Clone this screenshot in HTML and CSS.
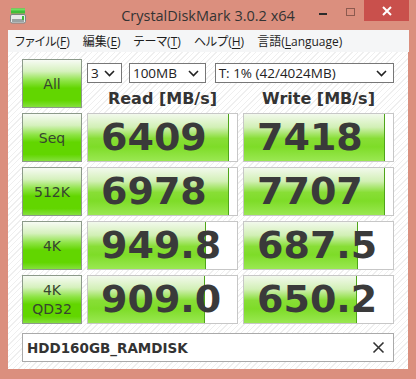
FILE: index.html
```html
<!DOCTYPE html>
<html lang="ja">
<head>
    <meta charset="UTF-8">
    <title>CrystalDiskMark 3.0.2 x64</title>
    <link rel="stylesheet" href="styles.css">
</head>
<body>
    <div class="window">
        <div class="titlebar">
            <div class="app-icon">
                <svg width="16" height="16" viewBox="0 0 16 16">
                    <rect x="1" y="0.5" width="14" height="5" fill="#3fbf3a"/>
                    <rect x="1" y="0.5" width="14" height="2" fill="#6fe060"/>
                    <rect x="0.5" y="6.5" width="15" height="8.5" rx="1.5" fill="#e8eaea" stroke="#7d8584"/>
                    <rect x="2" y="11" width="12" height="3" fill="#9aa2a2"/>
                    <rect x="12" y="8" width="2" height="4" fill="#3cb83a"/>
                </svg>
            </div>
            <div class="title">CrystalDiskMark 3.0.2 x64</div>
            <div class="controls">
                <span class="btn-min"></span>
                <span class="btn-max"></span>
                <span class="btn-close">
                    <svg width="10" height="10" viewBox="0 0 10 10">
                        <path d="M1 1L9 9M9 1L1 9" stroke="#fff" stroke-width="2"/>
                    </svg>
                </span>
            </div>
        </div>

        <ul class="menubar">
            <li>ファイル(<u>F</u>)</li>
            <li>編集(<u>E</u>)</li>
            <li>テーマ(<u>T</u>)</li>
            <li>ヘルプ(<u>H</u>)</li>
            <li>言語(<u>L</u>anguage)</li>
        </ul>

        <div class="client">
            <div class="board">
                <div class="test-btn">All</div>
                <div class="top-cell">
                    <div class="selects">
                        <div class="select sel-count">3 <svg class="chev" width="11" height="7" viewBox="0 0 11 7"><path d="M1 1L5.5 5.5L10 1" fill="none" stroke="#222" stroke-width="1.6"/></svg></div>
                        <div class="select sel-size">100MB <svg class="chev" width="11" height="7" viewBox="0 0 11 7"><path d="M1 1L5.5 5.5L10 1" fill="none" stroke="#222" stroke-width="1.6"/></svg></div>
                        <div class="select sel-drive">T: 1% (42/4024MB) <svg class="chev" width="11" height="7" viewBox="0 0 11 7"><path d="M1 1L5.5 5.5L10 1" fill="none" stroke="#222" stroke-width="1.6"/></svg></div>
                    </div>
                    <div class="heads">
                        <div>Read [MB/s]</div>
                        <div>Write [MB/s]</div>
                    </div>
                </div>

                <div class="test-btn">Seq</div>
                <div class="result"><div class="fill" style="width: 141px"></div><div class="value">6409</div></div>
                <div class="result"><div class="fill" style="width: 141px"></div><div class="value">7418</div></div>

                <div class="test-btn">512K</div>
                <div class="result"><div class="fill" style="width: 141px"></div><div class="value">6978</div></div>
                <div class="result"><div class="fill" style="width: 141px"></div><div class="value">7707</div></div>

                <div class="test-btn">4K</div>
                <div class="result"><div class="fill" style="width: 118px"></div><div class="value">949.8</div></div>
                <div class="result"><div class="fill" style="width: 114px"></div><div class="value">687.5</div></div>

                <div class="test-btn two-line">4K<br>QD32</div>
                <div class="result"><div class="fill" style="width: 117px"></div><div class="value">909.0</div></div>
                <div class="result"><div class="fill" style="width: 113px"></div><div class="value">650.2</div></div>
            </div>

            <div class="comment">
                <span>HDD160GB_RAMDISK</span>
                <svg width="13" height="13" viewBox="0 0 13 13">
                    <path d="M1.5 1.5L11.5 11.5M11.5 1.5L1.5 11.5" stroke="#333" stroke-width="1.6"/>
                </svg>
            </div>
        </div>
    </div>
</body>
</html>
```

FILE: styles.css
```css
body {
    margin: 0;
    padding: 0;
    background-color: #db8f7e;
    width: 416px;
    height: 379px;
    overflow: hidden;
    font-family: "Open Sans", "Noto Sans CJK JP", sans-serif;
    color: #333;
}
.window {
    width: 416px;
    height: 379px;
}
.titlebar {
    display: grid;
    grid-template-columns: 1fr auto 1fr;
    height: 30px;
}
.app-icon {
    padding: 7px 0 0 10px;
}
.title {
    font-size: 14.5px;
    line-height: 30px;
    color: #333;
    padding-top: 1px;
}
.controls {
    display: flex;
    justify-content: flex-end;
    align-items: flex-start;
    padding-right: 7px;
}
.btn-min {
    width: 8px;
    height: 2px;
    background: #2b2b2b;
    margin-top: 13px;
    margin-right: 19px;
}
.btn-max {
    width: 7px;
    height: 6px;
    border: 1px solid #8c5a4f;
    margin-top: 8px;
    margin-right: 9px;
}
.btn-close {
    width: 45px;
    height: 21px;
    background: #c9504c;
    display: flex;
    align-items: center;
    justify-content: center;
}
.menubar {
    list-style-type: none;
    display: flex;
    gap: 13px;
    margin: 0 7px 0 8px;
    padding: 0 0 0 7px;
    height: 22px;
    align-items: center;
    background: #f5f6f7;
    font-family: "Open Sans", "Noto Sans CJK JP", sans-serif;
    font-feature-settings: "palt";
    font-size: 12px;
    color: #1e1e1e;
}
.menubar u {
    text-decoration-thickness: 1px;
    text-underline-offset: 2px;
}
.client {
    margin: 0 8px;
    height: 317px;
    box-sizing: border-box;
    padding: 7px 14px 0 14px;
    background-color: #ffffff;
    background-image: repeating-linear-gradient(135deg, #ffffff 0px, #ffffff 3px, #efefef 3px, #efefef 4px);
}
.board {
    display: grid;
    grid-template-columns: 60px 151px 151px;
    grid-auto-rows: 49px;
    column-gap: 5px;
    row-gap: 5px;
}
.test-btn {
    border: 1px solid #8c9a8a;
    background: linear-gradient(#f7fbf4 0%, #d6f1be 24%, #8ee446 44%, #62d600 60%, #62d600 86%, #84e03c 100%);
    display: flex;
    align-items: center;
    justify-content: center;
    font-family: "DejaVu Sans", sans-serif;
    font-size: 14px;
    color: #36452f;
    text-align: center;
    line-height: 18px;
}
.test-btn.two-line {
    line-height: 19px;
}
.top-cell {
    grid-column: span 2;
}
.selects {
    display: flex;
    margin-top: 4px;
    height: 20px;
}
.select {
    box-sizing: border-box;
    height: 20px;
    border: 1px solid #777;
    background: #fff;
    font-size: 13.5px;
    line-height: 18px;
    padding-left: 3px;
    display: flex;
    align-items: center;
    justify-content: space-between;
    padding-right: 6px;
    color: #222;
}
.sel-count {
    width: 35px;
    margin-right: 7px;
}
.sel-size {
    width: 77px;
    margin-right: 9px;
}
.sel-drive {
    width: 180px;
}
.heads {
    display: grid;
    grid-template-columns: 151px 151px;
    column-gap: 5px;
    margin-top: 6px;
    font-family: "DejaVu Sans", sans-serif;
    font-weight: bold;
    font-size: 16px;
    color: #333;
    text-align: center;
}
.result {
    display: grid;
    border: 1px solid #c7c7c7;
    background: #fff;
}
.fill {
    grid-area: 1 / 1;
    box-sizing: border-box;
    border-right: 1px solid #4fa519;
    background: linear-gradient(#f2f9ec 0%, #d2f0b6 28%, #88de36 52%, #7edc28 70%, #9ae852 100%);
}
.value {
    grid-area: 1 / 1;
    font-family: "DejaVu Sans", sans-serif;
    font-weight: bold;
    font-size: 38px;
    line-height: 47px;
    padding-left: 13px;
    color: #3a3a3a;
}
.comment {
    margin-top: 9px;
    width: 372px;
    height: 29px;
    box-sizing: border-box;
    border: 1px solid #aaa;
    background: #fff;
    display: flex;
    align-items: center;
    justify-content: space-between;
    padding: 0 8px 0 4px;
    font-family: "DejaVu Sans", sans-serif;
    font-weight: bold;
    font-size: 13.5px;
    color: #333;
}
```
